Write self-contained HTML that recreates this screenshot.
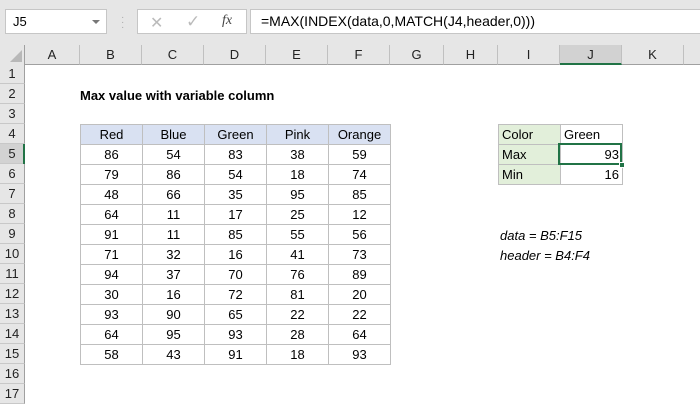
<!DOCTYPE html><html><head><style>
*{margin:0;padding:0;box-sizing:border-box}
body{width:700px;height:400px;overflow:hidden;background:#fff;font-family:"Liberation Sans",sans-serif;font-size:13px;color:#000;position:relative}
.a{position:absolute}
.tb{left:0;top:0;width:700px;height:45px;background:#e6e6e6}
.box{background:#fff;border:1px solid #c6c6c6}
.ch{top:45px;height:20px;background:#e6e6e6;border-right:1px solid #c0c0c0;border-bottom:1px solid #a0a0a0;text-align:center;line-height:19px;color:#222}
.rh{left:0;width:25px;height:20px;background:#e6e6e6;border-bottom:1px solid #c8c8c8;border-right:1px solid #a0a0a0;text-align:center;line-height:20px;color:#222}
.c{height:20px;line-height:19px;border-right:1px solid #bfbfbf;border-bottom:1px solid #bfbfbf;text-align:center}
</style></head><body>
<div class="a tb"></div>
<div class="a box" style="left:5px;top:9px;width:102px;height:25px;line-height:23px;padding-left:7px">J5</div>
<div class="a" style="left:92px;top:20px;border-left:4px solid transparent;border-right:4px solid transparent;border-top:4px solid #777"></div>
<div class="a" style="left:121px;top:15px;color:#aaa;font-size:10px;line-height:5px">·<br>·<br>·</div>
<div class="a box" style="left:137px;top:9px;width:110px;height:25px"></div>
<div class="a" style="left:150px;top:13px;color:#bbb;font-size:16px">✕</div>
<div class="a" style="left:186px;top:12px;color:#bbb;font-size:17px">✓</div>
<div class="a" style="left:222px;top:13px;font-family:'Liberation Serif',serif;font-style:italic;font-size:14px;color:#444">fx</div>
<div class="a box" style="left:250px;top:9px;width:460px;height:25px;line-height:23px;padding-left:10px;font-size:14px">=MAX(INDEX(data,0,MATCH(J4,header,0)))</div>
<div class="a" style="left:0;top:45px;width:25px;height:20px;background:#e6e6e6;border-right:1px solid #a0a0a0;border-bottom:1px solid #a0a0a0"></div>
<div class="a" style="left:10px;top:50px;border-left:12px solid transparent;border-bottom:12px solid #b8b8b8"></div>
<div class="a ch" style="left:25px;width:55px">A</div>
<div class="a ch" style="left:80px;width:62px">B</div>
<div class="a ch" style="left:142px;width:62px">C</div>
<div class="a ch" style="left:204px;width:62px">D</div>
<div class="a ch" style="left:266px;width:62px">E</div>
<div class="a ch" style="left:328px;width:62px">F</div>
<div class="a ch" style="left:390px;width:54px">G</div>
<div class="a ch" style="left:444px;width:54px">H</div>
<div class="a ch" style="left:498px;width:62px">I</div>
<div class="a ch" style="left:560px;width:62px;background:#d2d2d2;border-bottom:2px solid #217346">J</div>
<div class="a ch" style="left:622px;width:62px">K</div>
<div class="a ch" style="left:684px;width:20px"></div>
<div id="rows"></div>
<div class="a" style="left:80px;top:88px;font-weight:bold">Max value with variable column</div>
<div class="a" style="left:80px;top:124px;width:311px;border-top:1px solid #bfbfbf;border-left:1px solid #bfbfbf" id="t"></div>
<div class="a" style="left:498px;top:124px;width:125px;border-top:1px solid #bfbfbf;border-left:1px solid #bfbfbf">
<div style="display:flex"><div class="c" style="width:62px;background:#e2efda;text-align:left;padding-left:3px">Color</div><div class="c" style="width:62px;text-align:left;padding-left:3px">Green</div></div>
<div style="display:flex"><div class="c" style="width:62px;background:#e2efda;text-align:left;padding-left:3px">Max</div><div class="c" style="width:62px;text-align:right;padding-right:3px">93</div></div>
<div style="display:flex"><div class="c" style="width:62px;background:#e2efda;text-align:left;padding-left:3px">Min</div><div class="c" style="width:62px;text-align:right;padding-right:3px">16</div></div>
</div>
<div class="a" style="left:558px;top:143px;width:64px;height:22px;border:2px solid #217346"></div>
<div class="a" style="left:619px;top:162px;width:6px;height:6px;background:#217346;border:1px solid #fff"></div>
<div class="a" style="left:500px;top:228px;font-style:italic">data = B5:F15</div>
<div class="a" style="left:500px;top:248px;font-style:italic">header = B4:F4</div>
<div class="a" style="left:23px;top:144px;width:2px;height:20px;background:#217346"></div>
<script>
var r='';for(var i=1;i<=17;i++){var s=i==5?'background:#d2d2d2;':'';r+='<div class="a rh" style="top:'+(64+(i-1)*20)+'px;'+s+'">'+i+'</div>';}
document.getElementById('rows').innerHTML=r;
var d=[["Red","Blue","Green","Pink","Orange"],[86,54,83,38,59],[79,86,54,18,74],[48,66,35,95,85],[64,11,17,25,12],[91,11,85,55,56],[71,32,16,41,73],[94,37,70,76,89],[30,16,72,81,20],[93,90,65,22,22],[64,95,93,28,64],[58,43,91,18,93]];
var t='';d.forEach(function(row,k){t+='<div style="display:flex">';row.forEach(function(v){t+='<div class="c" style="width:62px;'+(k==0?'background:#d9e1f2':'')+'">'+v+'</div>'});t+='</div>'});
document.getElementById('t').innerHTML=t;
</script>
</body></html>
